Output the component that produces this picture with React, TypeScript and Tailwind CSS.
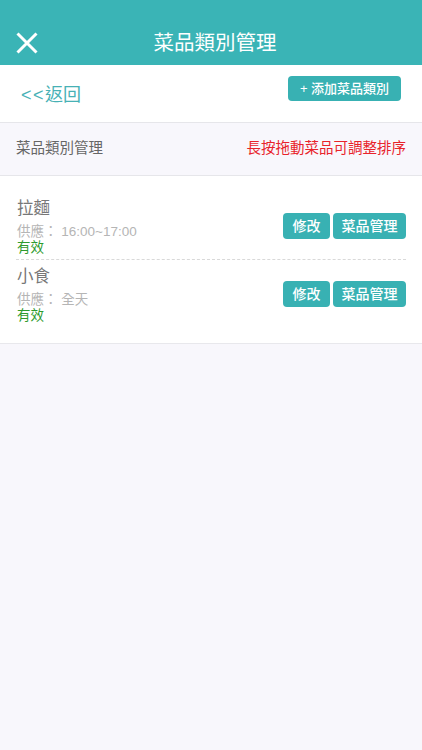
export default function App() {
  const rows = [
    { name: "拉麵", time: "16:00~17:00" },
    { name: "小食", time: "全天" },
  ];
  return (
    <div className="min-h-[750px] bg-[#f8f7fc] font-[family-name:Liberation_Sans,Noto_Sans_CJK_TC,sans-serif]">
      {/* Header */}
      <div className="h-[65px] bg-[#3ab4b6] pt-[20px]">
        <div className="flex h-[45px] items-center">
          <div className="flex w-[60px] items-center pl-[16px]">
            <svg width="22" height="22" viewBox="0 0 22 22" fill="none">
              <path d="M1.5 1.5 L20.5 20.5 M20.5 1.5 L1.5 20.5" stroke="white" strokeWidth="3" />
            </svg>
          </div>
          <div className="flex-1 text-center text-[20.5px] leading-[28px] text-white">菜品類別管理</div>
          <div className="w-[52px]" />
        </div>
      </div>

      {/* Sub bar */}
      <div className="flex h-[58px] items-start justify-between border-b border-[#e6e6ea] bg-white pl-[21px] pr-[21px]">
        <div className="pt-[17px] text-[18px] leading-[26px] text-[#47b1b5]">
          <span className="tracking-[1.5px]">&lt;&lt;</span>返回
        </div>
        <div className="mt-[11px] flex h-[25px] w-[113px] items-center justify-center rounded-[4px] bg-[#38b1b3] text-[13px] font-medium text-white">
          + 添加菜品類別
        </div>
      </div>

      {/* Section header */}
      <div className="flex h-[53px] items-center justify-between border-b border-[#e6e6ea] bg-[#f8f7fc] px-[16px] text-[14.5px]">
        <span className="text-[#666666]">菜品類別管理</span>
        <span className="text-[#e8232b]">長按拖動菜品可調整排序</span>
      </div>

      {/* List */}
      <div className="border-b border-[#e8e8ec] bg-white px-[16px] pt-[16px] pb-[16px]">
        {rows.map((r, i) => (
          <div
            key={r.name}
            className={`flex items-center justify-between pt-[4px] pb-[3px] ${
              i < rows.length - 1 ? "border-b border-dashed border-[#d9d9d9]" : ""
            }`}
          >
            <div className="pl-[1px]">
              <div className="text-[16.5px] leading-[24px] text-[#777777]">{r.name}</div>
              <div className="mt-[4px] text-[13.5px] leading-[16px] text-[#b5b5b5]">供應： {r.time}</div>
              <div className="text-[13.5px] leading-[16px] text-[#2e9b2e]">有效</div>
            </div>
            <div className="flex gap-[3px]">
              <div className="flex h-[26px] w-[47px] items-center justify-center rounded-[4px] bg-[#38b1b3] text-[14px] font-medium text-white">
                修改
              </div>
              <div className="flex h-[26px] w-[73px] items-center justify-center rounded-[4px] bg-[#38b1b3] text-[14px] font-medium text-white">
                菜品管理
              </div>
            </div>
          </div>
        ))}
      </div>
    </div>
  );
}
